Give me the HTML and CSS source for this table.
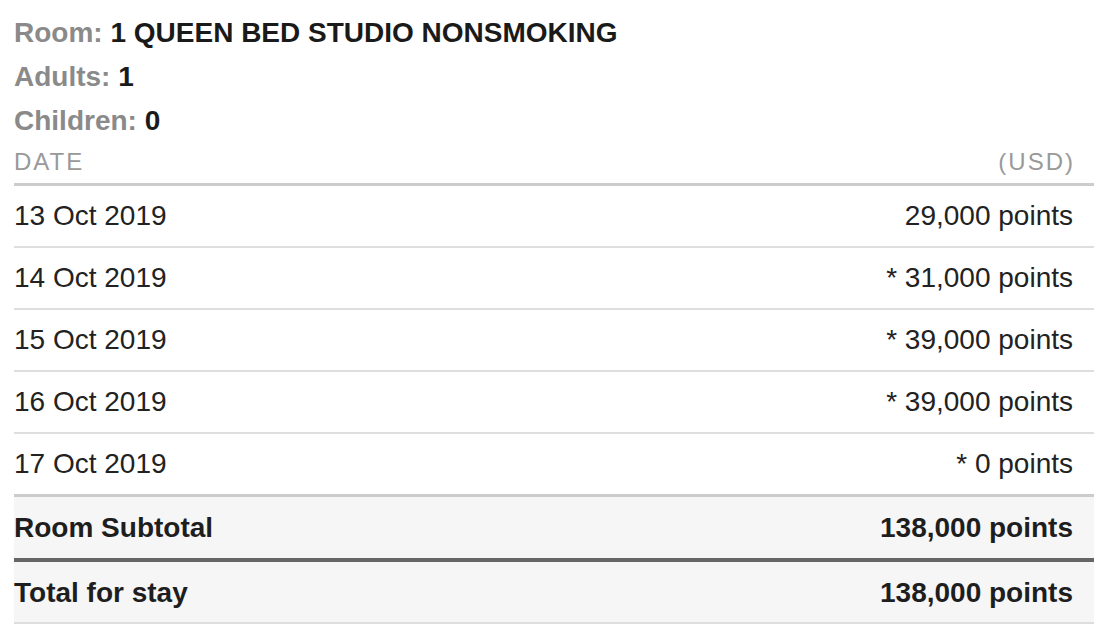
FILE: index.html
```html
<!DOCTYPE html>
<html lang="en">
<head>
<meta charset="utf-8">
<title>Stay summary</title>
<link rel="stylesheet" href="styles.css">
</head>
<body>
<div class="summary">
  <div class="info">
    <div class="info-line"><span class="label">Room:</span> <span class="value">1 QUEEN BED STUDIO NONSMOKING</span></div>
    <div class="info-line"><span class="label">Adults:</span> <span class="value">1</span></div>
    <div class="info-line"><span class="label">Children:</span> <span class="value">0</span></div>
  </div>
  <div class="rates">
    <div class="row head"><span>DATE</span><span>(USD)</span></div>
    <div class="row"><span>13 Oct 2019</span><span>29,000 points</span></div>
    <div class="row"><span>14 Oct 2019</span><span>* 31,000 points</span></div>
    <div class="row"><span>15 Oct 2019</span><span>* 39,000 points</span></div>
    <div class="row"><span>16 Oct 2019</span><span>* 39,000 points</span></div>
    <div class="row last"><span>17 Oct 2019</span><span>* 0 points</span></div>
    <div class="row sum subtotal"><span>Room Subtotal</span><span>138,000 points</span></div>
    <div class="row sum total"><span>Total for stay</span><span>138,000 points</span></div>
  </div>
</div>
</body>
</html>
```
FILE: styles.css
```css
html, body {
  margin: 0;
  padding: 0;
  background: #ffffff;
}
body {
  font-family: "Liberation Sans", Arial, sans-serif;
  color: #1e1e1e;
}
.summary {
  width: 1080px;
  padding: 11px 0 0 14px;
}
.info-line {
  font-size: 28px;
  line-height: 44px;
  font-weight: bold;
}
.label {
  color: #8a8a8a;
}
.value {
  color: #1a1a1a;
}
.row {
  display: flex;
  justify-content: space-between;
  font-size: 28px;
  line-height: 32px;
  padding: 14px 21px 14px 0;
  border-bottom: 2px solid #dedede;
  color: #222222;
}
.row.head {
  font-size: 24px;
  line-height: 28px;
  letter-spacing: 2px;
  color: #999999;
  padding: 5px 19px 7px 0;
  border-bottom: 3px solid #cccccc;
}
.row.last {
  border-bottom: 3px solid #cccccc;
}
.row.sum {
  background: #f6f6f6;
  font-weight: bold;
  color: #1e1e1e;
}
.row.subtotal {
  padding-top: 15px;
  border-bottom: 4px solid #666666;
}
.row.total {
  padding-top: 15px;
  padding-bottom: 13px;
  border-bottom: 2px solid #dedede;
}
```
